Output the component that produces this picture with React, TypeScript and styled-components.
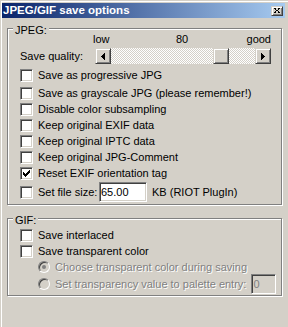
import styled, { createGlobalStyle } from "styled-components";

const GlobalStyle = createGlobalStyle`
  html, body {
    margin: 0;
    padding: 0;
    background: #d4d0c8;
  }
  body {
    font-family: "Liberation Sans", Arial, sans-serif;
    font-size: 11px;
    color: #000;
  }
`;

const Window = styled.div`
  width: 288px;
  height: 327px;
  box-sizing: border-box;
  padding: 3px 3px 0 2px;
  background: #d4d0c8;
  box-shadow: inset 1px 1px 0 #d4d0c8, inset 2px 2px 0 #fff;
  display: flex;
  flex-direction: column;
`;

const TitleBar = styled.div`
  height: 15px;
  display: flex;
  align-items: center;
  justify-content: space-between;
  padding: 0 2px 0 1px;
  background: linear-gradient(to right, #0a246a, #a6caf0);
`;

const Title = styled.span`
  color: #fff;
  font-weight: bold;
  font-size: 11.5px;
  line-height: 15px;
  white-space: nowrap;
`;

const raised = `
  box-sizing: border-box;
  background: #d4d0c8;
  border: 1px solid;
  border-color: #d4d0c8 #404040 #404040 #d4d0c8;
  box-shadow: inset 1px 1px 0 #fff, inset -1px -1px 0 #808080;
`;

const sunken = `
  box-sizing: border-box;
  border: 1px solid;
  border-color: #808080 #fff #fff #808080;
  box-shadow: inset 1px 1px 0 #404040, inset -1px -1px 0 #d4d0c8;
`;

const CloseButton = styled.div`
  ${raised}
  width: 12px;
  height: 10px;
  display: flex;
  align-items: center;
  justify-content: center;
`;

const Group = styled.div<{ $mt: number; $pt: number; $pb: number }>`
  position: relative;
  margin: ${(p) => p.$mt}px 3px 0 5px;
  padding: ${(p) => p.$pt}px 9px ${(p) => p.$pb}px 12px;
  border: 1px solid #808080;
  box-shadow: inset 1px 1px 0 #fff, 1px 1px 0 #fff;
  display: flex;
  flex-direction: column;
`;

const Legend = styled.span`
  position: absolute;
  top: -5px;
  left: 5px;
  padding: 0 2px;
  line-height: 13px;
  background: #d4d0c8;
`;

const Scale = styled.div`
  margin-left: 73px;
  width: 178px;
  height: 13px;
  line-height: 13px;
  display: grid;
  grid-template-columns: 1fr auto 1fr;
  & > span:last-child {
    text-align: right;
  }
`;

const SliderRow = styled.div`
  margin-top: 2px;
  height: 16px;
  display: flex;
  align-items: center;
`;

const SliderLabel = styled.span`
  width: 75px;
  line-height: 13px;
`;

const Slider = styled.div`
  width: 176px;
  height: 16px;
  display: flex;
`;

const ArrowButton = styled.div`
  ${raised}
  width: 16px;
  height: 16px;
  display: flex;
  align-items: center;
  justify-content: center;
`;

const Track = styled.div`
  position: relative;
  flex: 1;
  height: 16px;
  background: repeating-conic-gradient(#d4d0c8 0 25%, #fff 0 50%) 0 0 / 2px 2px;
`;

const Thumb = styled.div`
  ${raised}
  position: absolute;
  top: 0;
  width: 16px;
  height: 16px;
`;

const Row = styled.div<{ $mt?: number; $h?: number; $indent?: number }>`
  height: ${(p) => p.$h ?? 16}px;
  margin-top: ${(p) => p.$mt ?? 0}px;
  padding-left: ${(p) => p.$indent ?? 0}px;
  display: flex;
  align-items: center;
  gap: 5px;
`;

const Box = styled.div`
  ${sunken}
  width: 13px;
  height: 13px;
  flex: none;
  background: #fff;
  display: flex;
  align-items: center;
  justify-content: center;
`;

const Radio = styled.div`
  width: 12px;
  height: 12px;
  flex: none;
  box-sizing: border-box;
  border-radius: 50%;
  border: 1px solid;
  border-color: #808080 #fff #fff #808080;
  box-shadow: inset 1px 1px 0 #404040;
  background: #d4d0c8;
  display: flex;
  align-items: center;
  justify-content: center;
`;

const Dot = styled.div`
  width: 4px;
  height: 4px;
  border-radius: 50%;
  background: #808080;
`;

const Label = styled.span<{ $disabled?: boolean; $w?: number }>`
  line-height: 13px;
  white-space: nowrap;
  ${(p) => (p.$w ? `width: ${p.$w}px;` : "")}
  color: ${(p) => (p.$disabled ? "#808080" : "#000")};
  text-shadow: ${(p) => (p.$disabled ? "1px 1px 0 #fff" : "none")};
`;

const TextInput = styled.input<{ $w: number; $disabled?: boolean; $pushRight?: boolean }>`
  ${sunken}
  width: ${(p) => p.$w}px;
  height: 20px;
  margin: 0;
  margin-left: ${(p) => (p.$pushRight ? "auto" : "0")};
  padding: 0 1px;
  font-family: "Liberation Sans", Arial, sans-serif;
  font-size: 11px;
  color: ${(p) => (p.$disabled ? "#808080" : "#000")};
  background: ${(p) => (p.$disabled ? "#d4d0c8" : "#fff")};
  outline: none;
`;

const CheckMark = () => (
  <svg width="7" height="7" viewBox="0 0 7 7" shapeRendering="crispEdges">
    <path
      d="M6 0h1v1h-1z M5 1h2v1h-2z M0 2h1v1h-1z M4 2h3v1h-3z M0 3h2v1h-2z M3 3h3v1h-3z M0 4h5v1h-5z M1 5h3v1h-3z M2 6h1v1h-1z"
      fill="#000"
    />
  </svg>
);

const Check = ({ checked, children, mt, w }: any) => (
  <Row $mt={mt}>
    <Box>{checked && <CheckMark />}</Box>
    <Label $w={w}>{children}</Label>
  </Row>
);

const jpegOptions = [
  { text: "Save as progressive JPG", checked: false, mt: 3 },
  { text: "Save as grayscale JPG (please remember!)", checked: false, mt: 2 },
  { text: "Disable color subsampling", checked: false },
  { text: "Keep original EXIF data", checked: false },
  { text: "Keep original IPTC data", checked: false },
  { text: "Keep original JPG-Comment", checked: false },
  { text: "Reset EXIF orientation tag", checked: true },
];

export default function App() {
  const quality = 80;
  const thumbLeft = Math.round((quality / 100) * (144 - 16));

  return (
    <Window>
      <GlobalStyle />
      <TitleBar>
        <Title>JPEG/GIF save options</Title>
        <CloseButton>
          <svg width="6" height="5" viewBox="0 0 6 5" shapeRendering="crispEdges">
            <path
              d="M0 0h2v1h-2z M4 0h2v1h-2z M1 1h1v1h-1z M4 1h1v1h-1z M2 2h2v1h-2z M1 3h1v1h-1z M4 3h1v1h-1z M0 4h2v1h-2z M4 4h2v1h-2z"
              fill="#000"
            />
          </svg>
        </CloseButton>
      </TitleBar>

      <Group $mt={10} $pt={4} $pb={2}>
        <Legend>JPEG:</Legend>
        <Scale>
          <span>low</span>
          <span>{quality}</span>
          <span>good</span>
        </Scale>
        <SliderRow>
          <SliderLabel>Save quality:</SliderLabel>
          <Slider>
            <ArrowButton>
              <svg width="4" height="7" viewBox="0 0 4 7" shapeRendering="crispEdges">
                <path d="M0 3h1v1h-1z M1 2h1v3h-1z M2 1h1v5h-1z M3 0h1v7h-1z" fill="#000" />
              </svg>
            </ArrowButton>
            <Track>
              <Thumb style={{ left: thumbLeft }} />
            </Track>
            <ArrowButton>
              <svg width="4" height="7" viewBox="0 0 4 7" shapeRendering="crispEdges">
                <path d="M3 3h1v1h-1z M2 2h1v3h-1z M1 1h1v5h-1z M0 0h1v7h-1z" fill="#000" />
              </svg>
            </ArrowButton>
          </Slider>
        </SliderRow>
        {jpegOptions.map((o) => (
          <Check key={o.text} checked={o.checked} mt={o.mt}>
            {o.text}
          </Check>
        ))}
        <Row $mt={1} $h={20}>
          <Box />
          <Label $w={56}>Set file size:</Label>
          <TextInput $w={48} defaultValue="65.00" />
          <Label>KB (RIOT PlugIn)</Label>
        </Row>
      </Group>

      <Group $mt={13} $pt={8} $pb={1}>
        <Legend>GIF:</Legend>
        <Check>Save interlaced</Check>
        <Check>Save transparent color</Check>
        <Row $indent={18}>
          <Radio>
            <Dot />
          </Radio>
          <Label $disabled>Choose transparent color during saving</Label>
        </Row>
        <Row $indent={18} $h={20} $mt={-1}>
          <Radio />
          <Label $disabled>Set transparency value to palette entry:</Label>
          <TextInput $w={25} $disabled $pushRight disabled defaultValue="0" />
        </Row>
      </Group>
    </Window>
  );
}
